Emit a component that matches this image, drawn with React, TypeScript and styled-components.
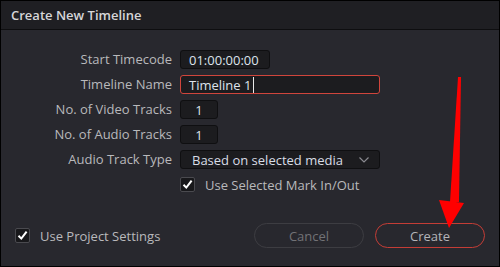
import styled, { createGlobalStyle } from "styled-components";

const GlobalStyle = createGlobalStyle`
  html, body {
    margin: 0;
    padding: 0;
    background: #000;
  }
  * {
    box-sizing: border-box;
  }
`;

const Dialog = styled.div`
  position: relative;
  width: 500px;
  height: 267px;
  border: 1px solid #000;
  background: #28282e;
  display: flex;
  flex-direction: column;
  font-family: "Open Sans", "Noto Sans", sans-serif;
  font-size: 13px;
  color: #b9b9bc;
  overflow: hidden;
`;

const TitleBar = styled.div`
  height: 29px;
  flex-shrink: 0;
  background: #1f1f23;
  border-bottom: 1px solid #0e0e10;
  display: flex;
  align-items: center;
  padding-left: 10px;
  font-size: 13px;
  font-weight: 600;
  color: #d6d6d8;
`;

const Form = styled.div`
  display: grid;
  grid-template-columns: 171px auto;
  grid-auto-rows: 19px;
  column-gap: 8px;
  row-gap: 6px;
  padding-top: 20px;
`;

const Label = styled.div`
  text-align: right;
  line-height: 19px;
  white-space: nowrap;
`;

const Field = styled.div<{ $width: number; $active?: boolean; $center?: boolean }>`
  width: ${(p) => p.$width}px;
  height: 19px;
  background: #1c1c1f;
  border: 1px solid ${(p) => (p.$active ? "#d0453c" : "#0f0f11")};
  border-radius: 3px;
  display: flex;
  align-items: center;
  justify-content: ${(p) => (p.$center ? "center" : "flex-start")};
  padding-left: ${(p) => (p.$center ? 0 : 8)}px;
  color: #dde3ec;
  white-space: nowrap;
`;

const Caret = styled.span`
  display: inline-block;
  width: 1px;
  height: 16px;
  margin-left: 2px;
  background: #e8e8e8;
`;

const Select = styled(Field)`
  justify-content: space-between;
  padding-left: 11px;
  padding-right: 10px;
  color: #d8dde6;
`;

const CheckRow = styled.div`
  display: flex;
  align-items: center;
  gap: 10px;
  white-space: nowrap;
`;

const Box = styled.span`
  width: 15px;
  height: 15px;
  border: 1px solid #4a4a4f;
  border-radius: 2px;
  background: #18181b;
  display: flex;
  align-items: center;
  justify-content: center;
  flex-shrink: 0;
`;

const Footer = styled.div`
  margin-top: auto;
  padding: 0 14px 18px 14px;
  display: flex;
  align-items: center;
`;

const Spacer = styled.div`
  flex: 1;
`;

const Button = styled.button<{ $primary?: boolean }>`
  width: 110px;
  height: 25px;
  margin-left: 11px;
  border-radius: 13px;
  background: transparent;
  border: 1px solid ${(p) => (p.$primary ? "#c43d36" : "#3d3d42")};
  color: ${(p) => (p.$primary ? "#b4b4b8" : "#727276")};
  font-family: inherit;
  font-size: 13px;
  padding: 0;
`;

const Arrow = styled.svg`
  position: absolute;
  left: 0;
  top: 0;
  pointer-events: none;
`;

const Check = () => (
  <svg width="11" height="11" viewBox="0 0 11 11">
    <path d="M1.5 5.8 L4.3 8.6 L9.6 1.6" fill="none" stroke="#fff" strokeWidth="2" />
  </svg>
);

const Chevron = () => (
  <svg width="10" height="6" viewBox="0 0 10 6">
    <path d="M0.5 0.5 L5 5 L9.5 0.5" fill="none" stroke="#8a8a90" strokeWidth="1.2" />
  </svg>
);

export default function App() {
  return (
    <>
      <GlobalStyle />
      <Dialog>
        <TitleBar>Create New Timeline</TitleBar>
        <Form>
          <Label>Start Timecode</Label>
          <Field $width={90}>01:00:00:00</Field>
          <Label>Timeline Name</Label>
          <Field $width={200} $active>
            Timeline 1<Caret />
          </Field>
          <Label>No. of Video Tracks</Label>
          <Field $width={38} $center>
            1
          </Field>
          <Label>No. of Audio Tracks</Label>
          <Field $width={38} $center>
            1
          </Field>
          <Label>Audio Track Type</Label>
          <Select $width={200}>
            Based on selected media
            <Chevron />
          </Select>
          <span />
          <CheckRow>
            <Box>
              <Check />
            </Box>
            Use Selected Mark In/Out
          </CheckRow>
        </Form>
        <Footer>
          <CheckRow>
            <Box>
              <Check />
            </Box>
            Use Project Settings
          </CheckRow>
          <Spacer />
          <Button>Cancel</Button>
          <Button $primary>Create</Button>
        </Footer>
        <Arrow width="500" height="267" viewBox="0 0 500 267">
          <polygon points="457,76 460,76 458,201 449,201" fill="#ff0000" />
          <polygon points="438,199 463,202 448,227" fill="#ff0000" />
        </Arrow>
      </Dialog>
    </>
  );
}
